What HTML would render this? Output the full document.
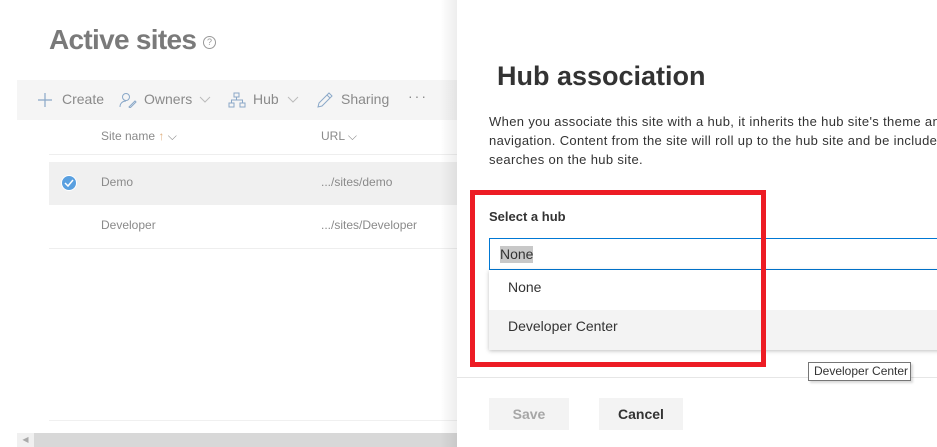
<!DOCTYPE html>
<html><head><style>
*{margin:0;padding:0;box-sizing:border-box}
body{width:937px;height:447px;overflow:hidden;background:#fff;font-family:"Segoe UI","Liberation Sans",sans-serif;position:relative}
.a{position:absolute;white-space:nowrap}
.l{color:#8a8a8a;font-size:13px}
</style></head><body>
<div class="a" style="left:49px;top:24px;font-size:28px;font-weight:bold;color:#7a7a7a;letter-spacing:-0.7px">Active sites</div>
<div class="a" style="left:203px;top:36px;width:13px;height:13px;border:1px solid #999;border-radius:50%;font-size:9px;color:#999;text-align:center;line-height:11px">?</div>
<div class="a" style="left:17px;top:80px;width:440px;height:40px;background:#f5f5f5"></div>
<svg class="a" style="left:37px;top:92px" width="16" height="16"><path d="M8 1v14M1 8h14" stroke="#8aa8c8" stroke-width="1.2"/></svg>
<div class="a l" style="left:62px;top:91px;font-size:14px">Create</div>
<svg class="a" style="left:119px;top:92px" width="18" height="16"><circle cx="7" cy="5" r="3.5" fill="none" stroke="#8aa8c8"/><path d="M1 15c0-4 3-6 6-6M10 15l6-6 1 1-6 6z" fill="none" stroke="#8aa8c8"/></svg>
<div class="a l" style="left:144px;top:91px;font-size:14px">Owners</div>
<svg class="a" style="left:199px;top:96px" width="12" height="8"><path d="M1 1l5 5 5-5" fill="none" stroke="#bbb"/></svg>
<svg class="a" style="left:228px;top:92px" width="18" height="16"><rect x="6" y="1" width="5" height="4" fill="none" stroke="#8aa8c8"/><rect x="1" y="11" width="5" height="4" fill="none" stroke="#8aa8c8"/><rect x="12" y="11" width="5" height="4" fill="none" stroke="#8aa8c8"/><path d="M8.5 5v3M3.5 11V8h11v3" fill="none" stroke="#8aa8c8"/></svg>
<div class="a l" style="left:253px;top:91px;font-size:14px">Hub</div>
<svg class="a" style="left:287px;top:96px" width="12" height="8"><path d="M1 1l5 5 5-5" fill="none" stroke="#bbb"/></svg>
<svg class="a" style="left:316px;top:91px" width="18" height="18"><path d="M2 16l1-4L13 2l3 3L6 15z M11 4l3 3" fill="none" stroke="#8aa8c8"/></svg>
<div class="a l" style="left:341px;top:91px;font-size:14px">Sharing</div>
<div class="a l" style="left:408px;top:88px;font-size:14px;letter-spacing:2px">···</div>
<div class="a l" style="left:101px;top:129px;font-size:12px">Site name <span style="color:#e0b080">↑</span> ⌵</div>
<div class="a l" style="left:321px;top:129px;font-size:12px">URL ⌵</div>
<div class="a" style="left:49px;top:154px;width:408px;height:1px;background:#eee"></div>
<div class="a" style="left:49px;top:162px;width:408px;height:43px;background:#f0f0f0"></div>
<div class="a" style="left:61px;top:175px;width:16px;height:16px;border-radius:50%;background:#5aa0e0;border:1px solid #fff"></div>
<svg class="a" style="left:64px;top:179px" width="10" height="8"><path d="M1 4l3 3 5-6" fill="none" stroke="#fff" stroke-width="1.5"/></svg>
<div class="a l" style="left:101px;top:175px;font-size:12px">Demo</div>
<div class="a l" style="left:321px;top:175px;font-size:12px">.../sites/demo</div>
<div class="a l" style="left:101px;top:218px;font-size:12px">Developer</div>
<div class="a l" style="left:321px;top:218px;font-size:12px">.../sites/Developer</div>
<div class="a" style="left:49px;top:248px;width:408px;height:1px;background:#eee"></div>
<div class="a" style="left:49px;top:420px;width:408px;height:1px;background:#f0f0f0"></div>
<div class="a" style="left:17px;top:433px;width:440px;height:14px;background:#d8d8d8"></div>
<div class="a" style="left:17px;top:433px;width:17px;height:14px;background:#f0f0f0;color:#aaa;font-size:8px;line-height:14px;text-align:center">◀</div>
<div class="a" style="left:440px;top:0;width:17px;height:447px;background:linear-gradient(90deg,rgba(0,0,0,0),rgba(0,0,0,0.07))"></div>
<div class="a" style="left:457px;top:0;width:480px;height:447px;background:#fff"></div>
<div class="a" style="left:497px;top:61px;font-size:27px;font-weight:bold;color:#333">Hub association</div>
<div class="a" style="left:489px;top:112px;font-size:13px;line-height:19px;color:#333;letter-spacing:0.35px">When you associate this site with a hub, it inherits the hub site's theme and<br>navigation. Content from the site will roll up to the hub site and be included in<br>searches on the hub site.</div>
<div class="a" style="left:489px;top:209px;font-size:13px;font-weight:600;color:#333">Select a hub</div>
<div class="a" style="left:489px;top:238px;width:460px;height:32px;border:1px solid #0078d4"></div>
<div class="a" style="left:500px;top:246px;font-size:14px;color:#333;background:#c8c8c8;line-height:17px">None</div>
<div class="a" style="left:489px;top:270px;width:460px;height:80px;background:#fff;box-shadow:0 1px 4px rgba(0,0,0,0.25)"></div>
<div class="a" style="left:508px;top:279px;font-size:14px;color:#333">None</div>
<div class="a" style="left:489px;top:310px;width:460px;height:40px;background:#f3f3f3"></div>
<div class="a" style="left:508px;top:318px;font-size:14px;color:#333">Developer Center</div>
<div class="a" style="left:470px;top:190px;width:296px;height:177px;border:5px solid #ed1c24"></div>
<div class="a" style="left:457px;top:377px;width:480px;height:1px;background:#e6e6e6"></div>
<div class="a" style="left:808px;top:362px;width:103px;height:19px;border:1px solid #767676;background:#fff;font-size:12px;color:#333;padding-left:5px;line-height:17px;box-shadow:2px 2px 2px rgba(0,0,0,0.15)">Developer Center</div>
<div class="a" style="left:489px;top:398px;width:80px;height:32px;background:#f3f3f3;color:#a6a6a6;font-size:14px;font-weight:600;text-align:center;line-height:32px">Save</div>
<div class="a" style="left:599px;top:398px;width:84px;height:32px;background:#f3f3f3;color:#333;font-size:14px;font-weight:600;text-align:center;line-height:32px">Cancel</div>
</body></html>
